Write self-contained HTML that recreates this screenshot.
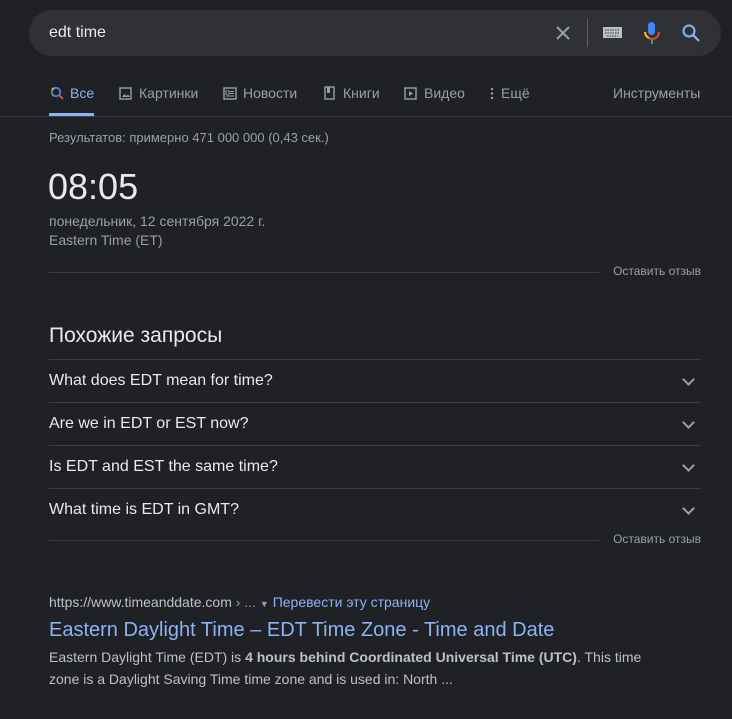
<!DOCTYPE html><html><head><style>
body{margin:0;background:#202124;width:732px;height:719px;overflow:hidden;font-family:"Liberation Sans",sans-serif;position:relative;color:#bdc1c6}
.a{position:absolute;white-space:nowrap}
.box{position:absolute;left:29px;top:10px;width:692px;height:46px;border-radius:23px;background:#303134}
.tab{position:absolute;top:85px;font-size:14px;color:#9aa0a6}
.hr{position:absolute;left:49px;width:652px;height:1px;background:#3c4043}
.q{position:absolute;left:49px;font-size:16px;color:#e8eaed}
.chev{position:absolute;left:684px;width:7px;height:7px;border-right:2px solid #9aa0a6;border-bottom:2px solid #9aa0a6;transform:rotate(45deg)}
.fb{position:absolute;right:31px;font-size:12px;color:#9aa0a6}
</style></head><body>
<div class="box"></div>
<div class="a" style="left:49px;top:24px;font-size:16px;color:#e8eaed">edt time</div>
<svg class="a" style="left:554px;top:24px" width="18" height="18"><path d="M3 3L15 15M15 3L3 15" stroke="#9aa0a6" stroke-width="2"/></svg>
<div class="a" style="left:587px;top:19px;width:1px;height:28px;background:#5f6368"></div>
<svg class="a" style="left:603px;top:27px" width="20" height="12"><rect x="0" y="0" width="19" height="11" fill="#bdc1c6"/><path d="M2 3h15M2 6h15M4 9h11" stroke="#303134" stroke-width="1" stroke-dasharray="1.5 1"/></svg>
<svg class="a" style="left:643px;top:21px" width="18" height="26"><rect x="5" y="1" width="7" height="13" rx="3.5" fill="#4285f4"/><path d="M2 11a7 7 0 0 0 14 0" stroke="#ea4335" stroke-width="2" fill="none"/><path d="M9 18v5" stroke="#34a853" stroke-width="2"/><path d="M2 11a7 7 0 0 0 4 6" stroke="#fbbc04" stroke-width="2" fill="none"/></svg>
<svg class="a" style="left:681px;top:23px" width="20" height="20"><circle cx="8" cy="8" r="5.5" stroke="#8ab4f8" stroke-width="2" fill="none"/><path d="M12 12l6 6" stroke="#8ab4f8" stroke-width="2.2"/></svg>
<svg class="a" style="left:50px;top:86px" width="14" height="14"><circle cx="6" cy="6" r="4.2" stroke="#4285f4" stroke-width="1.8" fill="none"/><path d="M2 8a4.2 4.2 0 0 0 2 2" stroke="#34a853" stroke-width="1.8" fill="none"/><path d="M9 9l4 4" stroke="#ea4335" stroke-width="2"/><path d="M2 4a4.2 4.2 0 0 1 2-2" stroke="#fbbc04" stroke-width="1.8" fill="none"/></svg>
<div class="tab" style="left:70px;color:#8ab4f8">Все</div>
<div class="a" style="left:49px;top:113px;width:45px;height:3px;background:#8ab4f8"></div>
<svg class="a" style="left:119px;top:87px" width="13" height="13"><rect x="1" y="1" width="11" height="11" stroke="#9aa0a6" fill="none" stroke-width="1.4"/><path d="M3 10l2.5-3 2 2 1.5-1.5 2 2.5z" fill="#9aa0a6"/></svg>
<div class="tab" style="left:139px">Картинки</div>
<svg class="a" style="left:223px;top:87px" width="14" height="13"><rect x="1" y="1" width="12" height="11" stroke="#9aa0a6" fill="none" stroke-width="1.4"/><path d="M3 4h3v3H3zM7 4.5h4M7 6.5h4M3 9h8" stroke="#9aa0a6" stroke-width="1"/></svg>
<div class="tab" style="left:243px">Новости</div>
<svg class="a" style="left:324px;top:86px" width="11" height="14"><rect x="1" y="1" width="9" height="12" stroke="#9aa0a6" fill="none" stroke-width="1.4"/><rect x="3" y="1" width="3" height="6" fill="#9aa0a6"/></svg>
<div class="tab" style="left:343px">Книги</div>
<svg class="a" style="left:404px;top:87px" width="13" height="13"><rect x="1" y="1" width="11" height="11" stroke="#9aa0a6" fill="none" stroke-width="1.4"/><path d="M5 4l4 2.5L5 9z" fill="#9aa0a6"/></svg>
<div class="tab" style="left:424px">Видео</div>
<svg class="a" style="left:490px;top:87px" width="4" height="13"><circle cx="2" cy="2" r="1.2" fill="#9aa0a6"/><circle cx="2" cy="6.5" r="1.2" fill="#9aa0a6"/><circle cx="2" cy="11" r="1.2" fill="#9aa0a6"/></svg>
<div class="tab" style="left:501px">Ещё</div>
<div class="tab" style="left:613px">Инструменты</div>
<div class="a" style="left:0;top:116px;width:732px;height:1px;background:#3c4043"></div>
<div class="a" style="left:49px;top:130px;font-size:13px;color:#9aa0a6">Результатов: примерно 471 000 000 (0,43 сек.)</div>
<div class="a" style="left:48px;top:166px;font-size:36px;color:#e8eaed">08:05</div>
<div class="a" style="left:49px;top:213px;font-size:14px;color:#9aa0a6">понедельник, 12 сентября 2022 г.</div>
<div class="a" style="left:49px;top:232px;font-size:14px;color:#9aa0a6">Eastern Time (ET)</div>
<div class="hr" style="top:272px;width:550px"></div>
<div class="fb" style="top:264px">Оставить отзыв</div>
<div class="a" style="left:49px;top:324px;font-size:21px;color:#e8eaed">Похожие запросы</div>
<div class="hr" style="top:359px"></div>
<div class="q" style="top:372px">What does EDT mean for time?</div><div class="chev" style="top:375px"></div>
<div class="hr" style="top:402px"></div>
<div class="q" style="top:415px">Are we in EDT or EST now?</div><div class="chev" style="top:418px"></div>
<div class="hr" style="top:445px"></div>
<div class="q" style="top:458px">Is EDT and EST the same time?</div><div class="chev" style="top:461px"></div>
<div class="hr" style="top:488px"></div>
<div class="q" style="top:501px">What time is EDT in GMT?</div><div class="chev" style="top:504px"></div>
<div class="hr" style="top:540px;width:550px"></div>
<div class="fb" style="top:532px">Оставить отзыв</div>
<div class="a" style="left:49px;top:594px;font-size:14px;color:#bdc1c6">https://www.timeanddate.com <span style="color:#9aa0a6">› ...</span> <span style="color:#9aa0a6;font-size:9px">▼</span> <span style="color:#8ab4f8">Перевести эту страницу</span></div>
<div class="a" style="left:49px;top:619px;font-size:20px;color:#8ab4f8">Eastern Daylight Time – EDT Time Zone - Time and Date</div>
<div class="a" style="left:49px;top:646px;font-size:14px;line-height:22px;color:#bdc1c6;white-space:normal;width:620px">Eastern Daylight Time (EDT) is <b>4 hours behind Coordinated Universal Time (UTC)</b>. This time zone is a Daylight Saving Time time zone and is used in: North ...</div>
</body></html>
